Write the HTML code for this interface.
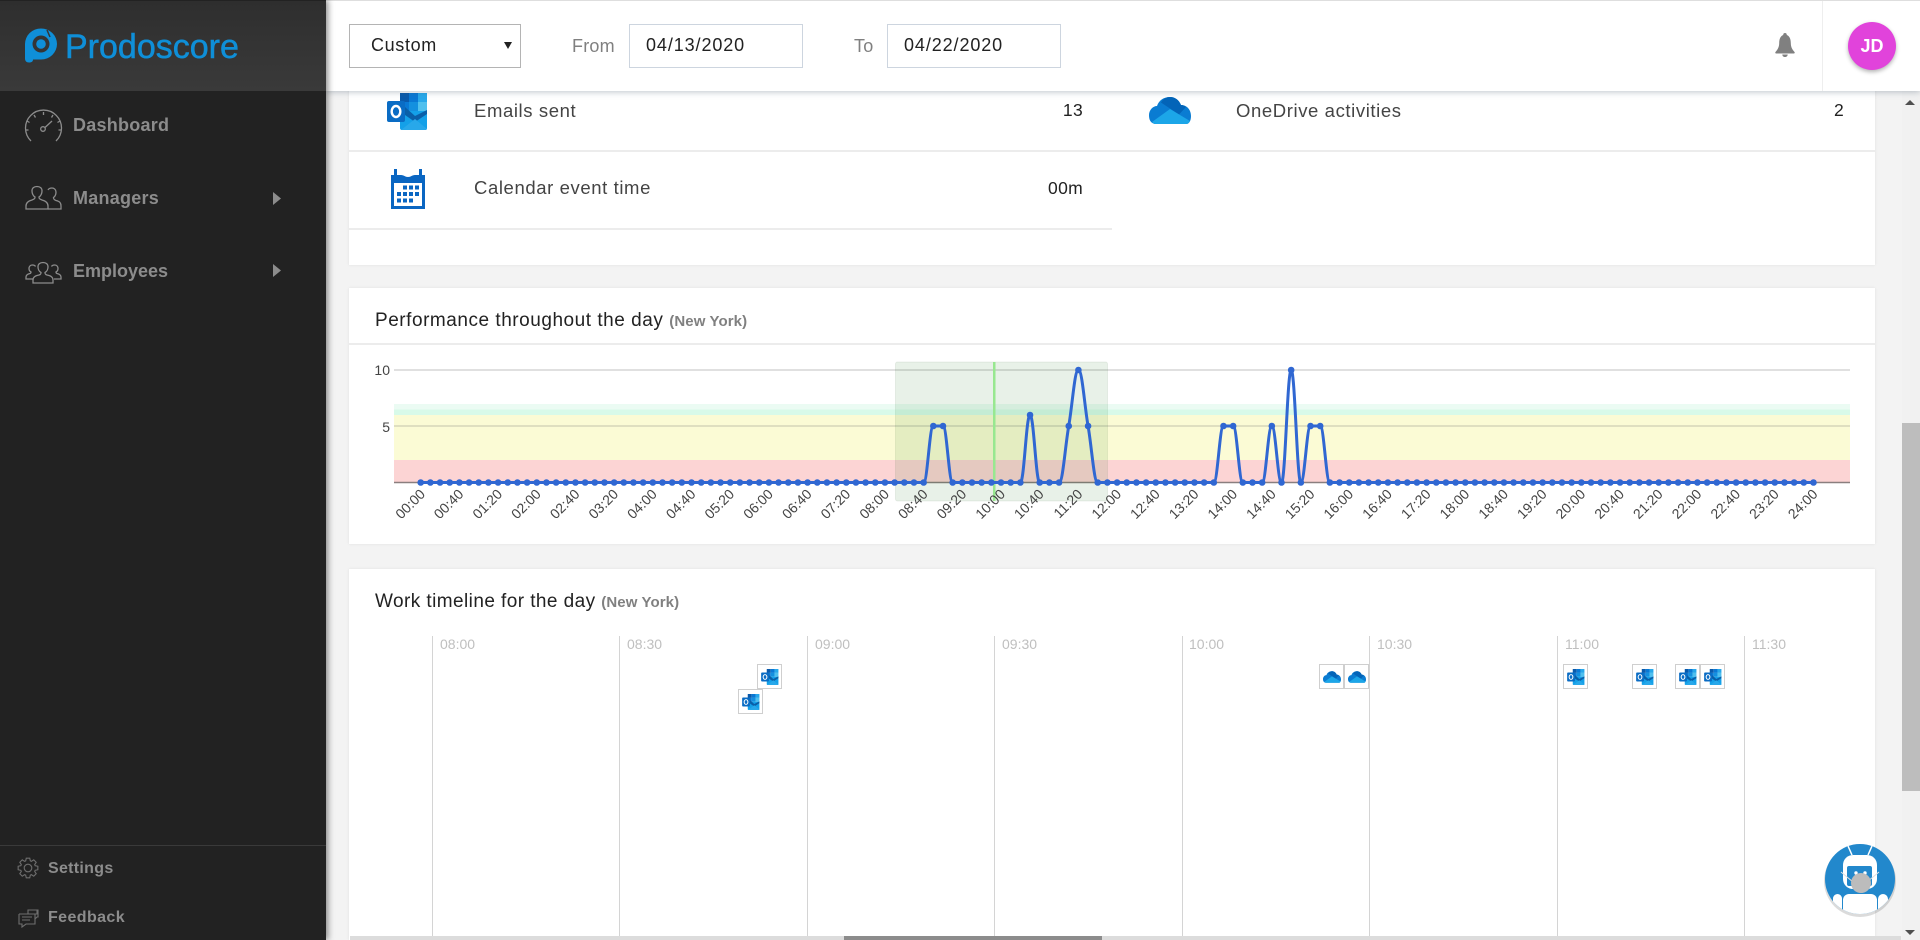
<!DOCTYPE html>
<html lang="en"><head><meta charset="utf-8"><title>Prodoscore</title>
<style>
html,body{margin:0;padding:0;width:1920px;height:940px;overflow:hidden;background:#f3f3f3;font-family:"Liberation Sans",sans-serif;color:#3a3a3a}
.a{position:absolute}
.t{position:absolute;white-space:nowrap;line-height:20px}
svg{position:absolute;overflow:visible}
.card{position:absolute;background:#fff;box-shadow:0 0 3px rgba(0,0,0,.08)}
.hr{position:absolute;height:1.500px;background:#ececec}
.nav{color:#8c8c8c;font-weight:700;font-size:18px;letter-spacing:.25px}
.row{font-size:18.500px;color:#444;letter-spacing:.6px}
.val{font-size:17.500px;color:#222;letter-spacing:.3px}
.ttl{font-size:19px;color:#222;letter-spacing:.53px}
.ny{font-size:15px;color:#808080;font-weight:700;letter-spacing:.1px}
.inp{position:absolute;top:24px;height:42px;border:1px solid #cdd5df;background:#fff;font-size:18px;color:#222;line-height:40px;letter-spacing:.9px;padding-left:16px;width:156px}
.lb{font-size:18px;color:#808080;letter-spacing:.2px}
.tm{position:absolute;top:634px;font-size:14px;color:#bfbfbf;line-height:20px}
.vl{position:absolute;top:636px;width:1px;height:300px;background:#d4d4d4}
.bx{position:absolute;width:23px;height:23px;border:1px solid #cfcfcf;background:#fff}
</style></head><body>

<!-- content -->
<div class="card" style="left:349px;top:80px;width:1526px;height:185px"></div>
<div class="hr" style="left:349px;top:150px;width:1526px"></div>
<div class="hr" style="left:349px;top:228px;width:763px"></div>
<div class="t row" style="left:474px;top:101px">Emails sent</div>
<div class="t val" style="right:837px;top:100px">13</div>
<div class="t row" style="left:474px;top:178px">Calendar event time</div>
<div class="t val" style="right:837px;top:178px">00m</div>
<div class="t row" style="left:1236px;top:101px">OneDrive activities</div>
<div class="t val" style="right:76px;top:100px">2</div>

<svg width="0" height="0" style="left:0;top:0">
<defs>
<symbol id="ol" viewBox="0 0 41 37">
<rect x="13" y="0" width="9" height="9" fill="#0a5aab"/>
<rect x="22" y="0" width="9" height="9" fill="#0a78d4"/>
<rect x="31" y="0" width="9" height="9" fill="#28a8ea"/>
<rect x="13" y="9" width="9" height="9" fill="#0a78d4"/>
<rect x="22" y="9" width="9" height="9" fill="#1490df"/>
<rect x="31" y="9" width="9" height="9" fill="#50c0ee"/>
<path d="M13 18H40V35a2 2 0 0 1-2 2H15a2 2 0 0 1-2-2z" fill="#14a0e8"/>
<path d="M18 14L28 23 40 17V21L28 29 18 22z" fill="#0a5fa8"/>
<path d="M14 37L28 26 40 36a2 2 0 0 1-2 1z" fill="#28a8ea"/>
<rect x="0" y="8" width="18" height="21" rx="2" fill="#0a6cc4"/>
<ellipse cx="9" cy="18.500" rx="4.300" ry="5.500" fill="none" stroke="#fff" stroke-width="2.400"/>
</symbol>
<symbol id="od" viewBox="0 0 42 27">
<path d="M6 27C1 26 0 22 0 18 0 13 4 9 8 9 10 3 15 0 21 0 26 0 30 3 32 8 38 8 42 13 42 19 42 24 40 27 37 27z" fill="#0a7cd2"/>
<path d="M12 5.500C14 2 17 0 21 0 26 0 30 3 32 8 34 8 36 9 37 10L30 17.500z" fill="#0364b8"/>
<path d="M3 25L21 12 41 24C40 26 39 27 37 27H6C5 27 4 26 3 25z" fill="#1ca6e8"/>
</symbol>
</defs>
</svg>

<svg style="left:387px;top:93px" width="41" height="37"><use href="#ol" width="41" height="37"/></svg>
<svg style="left:391px;top:169px" width="34" height="40" viewBox="0 0 34 40">
<path d="M0 40V6h3V0h3v6h4c3 0 4 2 7 2s4-2 7-2h4V0h3v6h3v34z" fill="#0a66c2"/>
<rect x="3" y="14" width="28" height="23" fill="#fff"/>
<g fill="#0a66c2"><rect x="12" y="16.500" width="4" height="4"/><rect x="18" y="16.500" width="4" height="4"/><rect x="24" y="16.500" width="4" height="4"/>
<rect x="6" y="23" width="4" height="4"/><rect x="12" y="23" width="4" height="4"/><rect x="18" y="23" width="4" height="4"/><rect x="24" y="23" width="4" height="4"/>
<rect x="6" y="29.500" width="4" height="4"/><rect x="12" y="29.500" width="4" height="4"/><rect x="18" y="29.500" width="4" height="4"/></g>
</svg>
<svg style="left:1149px;top:97px" width="42" height="27"><use href="#od" width="42" height="27"/></svg>

<div class="card" style="left:349px;top:288px;width:1526px;height:256px"></div>
<div class="hr" style="left:349px;top:343px;width:1526px"></div>
<div class="t ttl" style="left:375px;top:311px">Performance throughout the day <span class="ny">(New York)</span></div>

<div class="card" style="left:349px;top:569px;width:1526px;height:371px"></div>
<div class="t ttl" style="left:375px;top:592px;letter-spacing:.43px">Work timeline for the day <span class="ny">(New York)</span></div>

<svg style="left:0;top:0" width="1920" height="940" viewBox="0 0 1920 940">
<rect x="394" y="404" width="1456" height="5.500" fill="#ebfbf3"/>
<rect x="394" y="409.500" width="1456" height="5.500" fill="#d8fae9"/>
<rect x="394" y="415" width="1456" height="45" fill="#fbfbd5"/>
<rect x="394" y="460" width="1456" height="22.500" fill="#fcd4d4"/>
<line x1="394" x2="1850" y1="370" y2="370" stroke="#e0e0e0" stroke-width="2"/>
<line x1="394" x2="1850" y1="426" y2="426" stroke="#d6d6ba" stroke-width="1.500"/>
<line x1="394" x2="1850" y1="482.500" y2="482.500" stroke="#8a7f7f" stroke-width="1.500"/>
<g font-size="14" fill="#444" text-anchor="end" font-family="Liberation Sans, sans-serif">
<text x="390" y="375">10</text><text x="390" y="432">5</text>
</g>
<rect x="895.500" y="362" width="212" height="139" rx="2" fill="rgba(0,100,0,.09)" stroke="rgba(0,60,0,.07)"/>
<rect x="993" y="362" width="2.500" height="139" fill="#98e890"/>
<path d="M420.700 482.500H923.640C927.510 482.500 929.450 426 933.320 426H942.990C946.860 426 948.790 482.500 952.660 482.500H1020.360C1024.230 482.500 1026.170 415 1030.040 415C1033.910 415 1035.840 482.500 1039.710 482.500H1059.060C1062.930 482.500 1064.860 448.500 1068.730 426C1072.600 403.500 1074.530 370 1078.400 370C1082.270 370 1084.200 403.500 1088.070 426C1091.940 448.500 1093.870 482.500 1097.740 482.500H1213.800C1217.670 482.500 1219.610 426 1223.480 426H1233.150C1237.020 426 1238.950 482.500 1242.820 482.500H1262.160C1266.030 482.500 1267.970 426 1271.840 426C1275.710 426 1277.640 482.500 1281.510 482.500C1285.380 482.500 1287.310 370 1291.180 370C1295.050 370 1296.980 482.500 1300.850 482.500C1304.720 482.500 1306.650 426 1310.520 426H1320.200C1324.070 426 1326 482.500 1329.870 482.500H1813.500" fill="none" stroke="#3067d2" stroke-width="3"/>
<path d="M420.700 482.500H923.700M952.660 482.500H1020.400M1039.710 482.500H1059.100M1097.740 482.500H1213.900M1242.820 482.500H1262.200M1281.510 482.500h.1M1300.850 482.500h.1M1329.870 482.500H1813.600" fill="none" stroke="#3067d2" stroke-width="6.600" stroke-linecap="round" stroke-dasharray="0 9.672"/>
<g fill="#3067d2"><circle cx="933.320" cy="426" r="3.300"/><circle cx="942.990" cy="426" r="3.300"/><circle cx="1030.040" cy="415" r="3.300"/><circle cx="1068.730" cy="426" r="3.300"/><circle cx="1078.400" cy="370" r="3.300"/><circle cx="1088.070" cy="426" r="3.300"/><circle cx="1223.480" cy="426" r="3.300"/><circle cx="1233.150" cy="426" r="3.300"/><circle cx="1271.840" cy="426" r="3.300"/><circle cx="1291.180" cy="370" r="3.300"/><circle cx="1310.520" cy="426" r="3.300"/><circle cx="1320.200" cy="426" r="3.300"/></g>
<g font-size="14" fill="#444" text-anchor="end" font-family="Liberation Sans, sans-serif">
<text transform="translate(426 495) rotate(-45)">00:00</text>
<text transform="translate(464.400 495) rotate(-45)">00:40</text>
<text transform="translate(503.100 495) rotate(-45)">01:20</text>
<text transform="translate(541.800 495) rotate(-45)">02:00</text>
<text transform="translate(580.500 495) rotate(-45)">02:40</text>
<text transform="translate(619.100 495) rotate(-45)">03:20</text>
<text transform="translate(657.800 495) rotate(-45)">04:00</text>
<text transform="translate(696.500 495) rotate(-45)">04:40</text>
<text transform="translate(735.200 495) rotate(-45)">05:20</text>
<text transform="translate(773.900 495) rotate(-45)">06:00</text>
<text transform="translate(812.600 495) rotate(-45)">06:40</text>
<text transform="translate(851.300 495) rotate(-45)">07:20</text>
<text transform="translate(890 495) rotate(-45)">08:00</text>
<text transform="translate(928.600 495) rotate(-45)">08:40</text>
<text transform="translate(967.300 495) rotate(-45)">09:20</text>
<text transform="translate(1006 495) rotate(-45)">10:00</text>
<text transform="translate(1044.700 495) rotate(-45)">10:40</text>
<text transform="translate(1083.400 495) rotate(-45)">11:20</text>
<text transform="translate(1122.100 495) rotate(-45)">12:00</text>
<text transform="translate(1160.800 495) rotate(-45)">12:40</text>
<text transform="translate(1199.500 495) rotate(-45)">13:20</text>
<text transform="translate(1238.100 495) rotate(-45)">14:00</text>
<text transform="translate(1276.800 495) rotate(-45)">14:40</text>
<text transform="translate(1315.500 495) rotate(-45)">15:20</text>
<text transform="translate(1354.200 495) rotate(-45)">16:00</text>
<text transform="translate(1392.900 495) rotate(-45)">16:40</text>
<text transform="translate(1431.600 495) rotate(-45)">17:20</text>
<text transform="translate(1470.300 495) rotate(-45)">18:00</text>
<text transform="translate(1509 495) rotate(-45)">18:40</text>
<text transform="translate(1547.600 495) rotate(-45)">19:20</text>
<text transform="translate(1586.300 495) rotate(-45)">20:00</text>
<text transform="translate(1625 495) rotate(-45)">20:40</text>
<text transform="translate(1663.700 495) rotate(-45)">21:20</text>
<text transform="translate(1702.400 495) rotate(-45)">22:00</text>
<text transform="translate(1741.100 495) rotate(-45)">22:40</text>
<text transform="translate(1779.800 495) rotate(-45)">23:20</text>
<text transform="translate(1818.500 495) rotate(-45)">24:00</text>
</g>
</svg>

<!-- timeline -->
<div class="vl" style="left:432px"></div><div class="tm" style="left:440px">08:00</div>
<div class="vl" style="left:619px"></div><div class="tm" style="left:627px">08:30</div>
<div class="vl" style="left:807px"></div><div class="tm" style="left:815px">09:00</div>
<div class="vl" style="left:994px"></div><div class="tm" style="left:1002px">09:30</div>
<div class="vl" style="left:1182px"></div><div class="tm" style="left:1189px">10:00</div>
<div class="vl" style="left:1369px"></div><div class="tm" style="left:1377px">10:30</div>
<div class="vl" style="left:1557px"></div><div class="tm" style="left:1565px">11:00</div>
<div class="vl" style="left:1744px"></div><div class="tm" style="left:1752px">11:30</div>

<div class="bx" style="left:757px;top:664px"><svg style="left:3px;top:4px" width="18" height="16"><use href="#ol" width="18" height="16"/></svg></div>
<div class="bx" style="left:738px;top:689px"><svg style="left:3px;top:4px" width="18" height="16"><use href="#ol" width="18" height="16"/></svg></div>
<div class="bx" style="left:1319px;top:664px"><svg style="left:3px;top:6px" width="18" height="12"><use href="#od" width="18" height="12"/></svg></div>
<div class="bx" style="left:1344px;top:664px"><svg style="left:3px;top:6px" width="18" height="12"><use href="#od" width="18" height="12"/></svg></div>
<div class="bx" style="left:1563px;top:664px"><svg style="left:3px;top:4px" width="18" height="16"><use href="#ol" width="18" height="16"/></svg></div>
<div class="bx" style="left:1632px;top:664px"><svg style="left:3px;top:4px" width="18" height="16"><use href="#ol" width="18" height="16"/></svg></div>
<div class="bx" style="left:1675px;top:664px"><svg style="left:3px;top:4px" width="18" height="16"><use href="#ol" width="18" height="16"/></svg></div>
<div class="bx" style="left:1700px;top:664px"><svg style="left:3px;top:4px" width="18" height="16"><use href="#ol" width="18" height="16"/></svg></div>

<!-- scrollbars -->
<div class="a" style="left:350px;top:936px;width:1551px;height:4px;background:#dcdcdc"></div>
<div class="a" style="left:844px;top:936px;width:258px;height:4px;background:#8c8c8c"></div>
<div class="a" style="left:1902px;top:0;width:18px;height:940px;background:#f1f1f1"></div>
<div class="a" style="left:1902px;top:423px;width:18px;height:368px;background:#bdbdbd"></div>
<div class="a" style="left:1905px;top:100px;border:5px solid transparent;border-top:0;border-bottom:5px solid #505050"></div>
<div class="a" style="left:1905px;top:930px;border:5px solid transparent;border-bottom:0;border-top:5px solid #505050"></div>

<!-- header -->
<div class="a" style="left:326px;top:1px;width:1594px;height:90px;background:#fff;box-shadow:0 1px 6px rgba(70,90,110,.35)"></div>
<div class="a" style="left:0;top:0;width:1920px;height:1px;background:#dedede"></div>
<div class="a" style="left:349px;top:24px;width:170px;height:42px;border:1px solid #b4b4b4;background:#fff"></div>
<div class="t" style="left:371px;top:35px;font-size:18px;color:#222;letter-spacing:.65px">Custom</div>
<div class="a" style="left:504px;top:42px;border:4px solid transparent;border-bottom:0;border-top:7px solid #222"></div>
<div class="t lb" style="left:572px;top:36px">From</div>
<div class="inp" style="left:629px">04/13/2020</div>
<div class="t lb" style="left:854px;top:36px">To</div>
<div class="inp" style="left:887px">04/22/2020</div>
<svg style="left:1774px;top:33px" width="22" height="24" viewBox="0 0 22 24"><path d="M11 0c1.200 0 1.800.800 1.800 2 3 1.200 4 4.500 4 8 0 4 1.500 6.500 3.700 9 .5.600.2 1.500-.6 1.500H2.100c-.8 0-1.100-.9-.6-1.500C3.700 16.500 5.200 14 5.200 10c0-3.500 1-6.800 4-8C9.200.8 9.800 0 11 0zM8.300 21.500h5.400c0 1.500-1.200 2.500-2.700 2.500s-2.700-1-2.700-2.500z" fill="#808080"/></svg>
<div class="a" style="left:1822px;top:1px;width:1px;height:90px;background:#eeeeee"></div>
<div class="a" style="left:1848px;top:22px;width:48px;height:48px;border-radius:50%;background:#e143db;box-shadow:0 2px 4px rgba(0,0,0,.3);color:#fff;font-size:18px;font-weight:700;text-align:center;line-height:48px">JD</div>

<!-- sidebar -->
<div class="a" style="left:0;top:0;width:326px;height:940px;background:#222;box-shadow:2px 0 6px rgba(0,0,0,.45)"></div>
<div class="a" style="left:0;top:1px;width:326px;height:90px;background:linear-gradient(#2e2e2e,#3a3a3a)"></div>
<svg style="left:0;top:0" width="326" height="940" viewBox="0 0 326 940">
<!-- logo -->
<path d="M25 44a16 15.500 0 1 1 16 15.500h-8v0c0 1.800-1 3-4 3-2.500 0-4-1.500-4-4z" fill="#0f8fd8"/>
<circle cx="41" cy="44" r="8.500" fill="#353535"/>
<circle cx="41" cy="44" r="4.800" fill="#0f8fd8"/>
<path d="M47 30l3 7" stroke="#353535" stroke-width="1.500"/>
<!-- gauge -->
<g fill="none" stroke="#8c8c8c" stroke-width="1.300">
<path d="M31 141a18 18 0 1 1 25 0"/>
<path d="M43.500 112v3M34 115l1.500 2.500M53 115l-1.500 2.500M27 121l2.500 1.500M60 121l-2.500 1.500M25.500 130h3M61.500 130h-3"/>
<circle cx="43" cy="129" r="2.300"/><path d="M45 127.500l7-6.500"/>
<!-- managers -->
<path d="M26 209v-3c0-3 2-5 6-6 3-1 3-2 3-3-2-1-3-4-3-6 0-3 2-4.500 5-4.500s5 1.500 5 4.500c0 2-1 5-3 6 0 1 0 2 3 3 4 1 6 3 6 6v3z"/>
<path d="M48 209h13v-3c0-3-1-4.500-5-5.500-2.500-.8-2.500-2-2.500-3 1.500-1 2.500-3 2.500-5.500 0-2.500-2-4-4-4s-3.500 1-4 2"/>
<!-- employees -->
<path d="M33 283v-3c0-3 3-4.500 6-5 2-.5 2-1.500 2-2.500-2-1-3-3.500-3-5.500 0-3 2-4.500 5-4.500s5 1.500 5 4.500c0 2-1 4.500-3 5.500 0 1 0 2 2 2.500 3 .5 6 2 6 5v3z"/>
<path d="M33 279h-7v-2c0-2 2-3 4-3.500 1-.3 1-1 1-1.500-1.500-.8-2-2-2-3.500 0-2.200 1.500-3.500 3.500-3.500 1.500 0 2.500.5 3 1.500"/>
<path d="M54 279h7v-2c0-2-2-3-4-3.500-1-.3-1-1-1-1.500 1.500-.8 2-2 2-3.500 0-2.200-1.500-3.500-3.500-3.500-1.500 0-2.500.5-3 1.500"/>
</g>
<path d="M273 192l8 6.500-8 6.500zM273 264l8 6.500-8 6.500z" fill="#8c8c8c"/>
<rect x="0" y="845" width="326" height="1" fill="#3a3a3a"/>
<!-- settings -->
<g fill="none" stroke="#6e6e6e" stroke-width="1.100">
<g transform="translate(28 868)"><circle r="3.800"/>
<polygon points="7.130,-2.320 9.850,-1.740 9.850,1.740 7.130,2.320 6.680,3.400 8.200,5.730 5.730,8.200 3.400,6.680 2.320,7.130 1.740,9.850 -1.740,9.850 -2.320,7.130 -3.400,6.680 -5.730,8.200 -8.200,5.730 -6.680,3.400 -7.130,2.320 -9.850,1.740 -9.850,-1.740 -7.130,-2.320 -6.680,-3.400 -8.200,-5.730 -5.730,-8.200 -3.400,-6.680 -2.320,-7.130 -1.740,-9.850 1.740,-9.850 2.320,-7.130 3.400,-6.680 5.730,-8.200 8.200,-5.730 6.680,-3.400"/></g>
<!-- feedback -->
<path d="M19 914h18v-4h-9v4M19 914v10h3v3l4-3h9v-10" />
<path d="M30 910h8v7h-1l-2 2v-2"/>
<path d="M22 917h10M22 920h8"/>
</g>
</svg>
<div class="t nav" style="left:73px;top:115px">Dashboard</div>
<div class="t nav" style="left:73px;top:188px">Managers</div>
<div class="t nav" style="left:73px;top:261px;letter-spacing:0">Employees</div>
<div class="t nav" style="left:48px;top:859px;font-size:16px;letter-spacing:.3px">Settings</div>
<div class="t nav" style="left:48px;top:908px;font-size:16px;letter-spacing:.4px">Feedback</div>
<div class="t" style="left:65px;top:27px;font-size:34px;line-height:40px;color:#0f8fd8;-webkit-text-stroke:.5px #0f8fd8">Prodoscore</div>

<!-- bot -->
<svg style="left:1820px;top:839px" width="80" height="80" viewBox="0 0 80 80">
<defs><clipPath id="c"><circle cx="40" cy="40" r="35"/></clipPath></defs>
<circle cx="40" cy="42" r="36" fill="rgba(0,0,0,.14)"/>
<circle cx="40" cy="40" r="35" fill="#2288cc"/>
<g clip-path="url(#c)">
<path d="M32 16l-4-9M48 16l4-9" stroke="#fff" stroke-width="1.500"/>
<rect x="23" y="16" width="34" height="34" rx="10" fill="#fff"/>
<rect x="27" y="27" width="25" height="20" rx="2" fill="#2288cc"/>
<circle cx="36" cy="34" r="1.700" fill="#fff"/><circle cx="45" cy="34" r="1.700" fill="#fff"/>
<path d="M21 33l12 10M59 33l-12 10" stroke="#e0e0e0" stroke-width="1"/>
<circle cx="41" cy="44" r="10" fill="#bcbcbc"/>
<rect x="23" y="55" width="34" height="26" rx="6" fill="#fff"/>
<rect x="13" y="55" width="9" height="22" rx="4.500" fill="#fff"/>
<rect x="58" y="55" width="10" height="22" rx="5" fill="#fff"/>
</g>
</svg>
</body></html>
